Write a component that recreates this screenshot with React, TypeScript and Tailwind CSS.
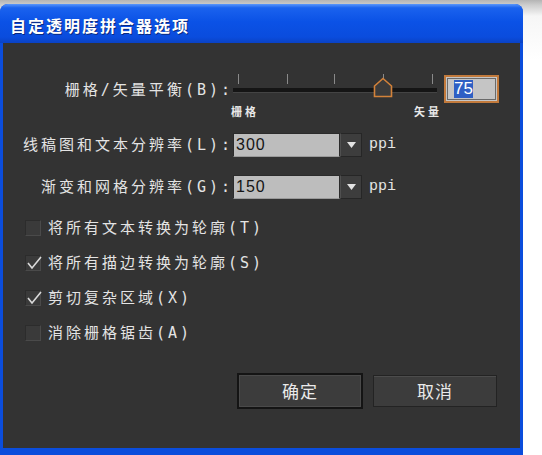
import * as React from "react";

// 自定透明度拼合器选项 — dark dialog inside an XP-style blue frame

const checkRows = [
  { label: "将所有文本转换为轮廓(T)", checked: false },
  { label: "将所有描边转换为轮廓(S)", checked: true },
  { label: "剪切复杂区域(X)", checked: true },
  { label: "消除栅格锯齿(A)", checked: false },
];

const Select = ({ value }: { value: string }) => (
  <div className="flex items-center">
    <div className="flex h-[24px] w-[129px]">
      <div className="flex-1 border border-[#2b2b2b] border-b-[#9a9a9a] bg-[#bdbdbd] pl-[2px] font-['Liberation_Sans',sans-serif] text-[16px] leading-[22px] tracking-[1px] text-[#151515]">
        {value}
      </div>
      <div className="flex w-[22px] items-center justify-center border border-[#262626] border-l-[#505050] bg-[#3d3d3d]">
        <svg width="9" height="6" viewBox="0 0 9 6">
          <path d="M0 0 H9 L4.5 6 Z" fill="#e2e2e2" />
        </svg>
      </div>
    </div>
    <span className="ml-[7px] font-['Liberation_Mono',monospace] text-[15px] leading-[20px] text-[#e4e4e4]">ppi</span>
  </div>
);

const Slider = () => (
  <div className="flex w-[208px] flex-col">
    <svg width="208" height="25" viewBox="0 0 208 25">
      {[5, 54, 101, 150, 199].map((x) => (
        <line key={x} x1={x + 0.5} y1="1" x2={x + 0.5} y2="11" stroke="#8a8a8a" strokeWidth="1" />
      ))}
      <rect x="0" y="15" width="204" height="4" fill="#151515" />
      <rect x="0" y="19" width="204" height="1" fill="#444" />
      <path d="M150 5.5 L158.5 13 V23.5 H141.5 V13 Z" fill="#3b3b3b" stroke="#d3823a" strokeWidth="1.6" />
    </svg>
    <div className="mt-[6px] flex font-['Noto_Sans_CJK_SC',sans-serif] text-[11px] font-bold leading-[14px] tracking-[3px] text-[#e8e8e8]">
      <span className="ml-[-2px]">栅格</span>
      <span className="ml-auto mr-[-1px]">矢量</span>
    </div>
  </div>
);

const CheckRow = ({ label, checked }: { label: string; checked: boolean }) => (
  <div className="flex h-[20px] items-center pl-[22px]">
    <div className="relative h-[16px] w-[16px] border border-[#4a4a4a] border-t-[#2c2c2c] border-l-[#2c2c2c] bg-[#3a3a3a]">
      {checked && (
        <svg className="absolute left-[0px] top-[-2px]" width="17" height="17" viewBox="0 0 17 17">
          <path d="M2 9 L6 14 L15 3" fill="none" stroke="#dadada" strokeWidth="1.6" />
        </svg>
      )}
    </div>
    <span className="ml-[7px] font-['DejaVu_Sans_Mono','Noto_Sans_CJK_SC',monospace] text-[15px] leading-[20px] tracking-[3px] text-[#e4e4e4]">
      {label}
    </span>
  </div>
);

export default function App() {
  return (
    <div className="h-[455px] w-[542px] overflow-hidden bg-[linear-gradient(to_bottom,#b4b4b4_0px,#cdcdcd_5px,#f6f6f6_16px,#ffffff_60px)] pt-[4px]">
      <div className="flex h-[451px] w-[523px] flex-col overflow-hidden rounded-t-[8px] bg-[#0b4ddc]">
        {/* 标题栏 */}
        <div className="flex h-[39px] items-center bg-[linear-gradient(to_bottom,#5a96fa_0%,#1a62ee_10%,#0b52e6_45%,#0a4cdd_85%,#0a42c4_100%)] pl-[10px] pt-[3px]">
          <span className="font-['Noto_Sans_CJK_SC',sans-serif] text-[16px] font-bold leading-[20px] tracking-[2px] text-white [text-shadow:1px_1px_0_#0a2a80]">
            自定透明度拼合器选项
          </span>
        </div>

        {/* 对话框内容 */}
        <div className="mx-[3px] mb-[7px] flex flex-1 flex-col bg-[#333333] pt-[30px]">
          {/* 栅格/矢量平衡 */}
          <div className="flex items-start">
            <div className="mt-[7px] w-[230px] text-right font-['DejaVu_Sans_Mono','Noto_Sans_CJK_SC',monospace] text-[15px] leading-[20px] tracking-[3px] text-[#e4e4e4]">
              栅格/矢量平衡(B):
            </div>
            <Slider />
            <div className="ml-[3px] mt-[2px] h-[28px] w-[55px] border-2 border-[#c27a3c] bg-[#c5c5c5] p-[1px]">
              <div className="flex h-full items-center border border-[#6a6a6a] pl-[6px]">
                <span className="bg-[#2e5fc4] font-['Liberation_Sans',sans-serif] text-[17px] leading-[18px] text-white">75</span>
              </div>
            </div>
          </div>

          {/* 分辨率 */}
          <div className="mt-[15px] flex items-center">
            <div className="w-[230px] text-right font-['DejaVu_Sans_Mono','Noto_Sans_CJK_SC',monospace] text-[15px] leading-[20px] tracking-[3px] text-[#e4e4e4]">
              线稿图和文本分辨率(L):
            </div>
            <Select value="300" />
          </div>
          <div className="mt-[18px] flex items-center">
            <div className="w-[230px] text-right font-['DejaVu_Sans_Mono','Noto_Sans_CJK_SC',monospace] text-[15px] leading-[20px] tracking-[3px] text-[#e4e4e4]">
              渐变和网格分辨率(G):
            </div>
            <Select value="150" />
          </div>

          {/* 选项 */}
          <div className="mt-[19px] flex flex-col gap-[15px]">
            {checkRows.map((row) => (
              <CheckRow key={row.label} label={row.label} checked={row.checked} />
            ))}
          </div>

          {/* 按钮 */}
          <div className="mt-[30px] flex items-center justify-end gap-[10px] pr-[23px]">
            <button className="h-[36px] w-[126px] border-2 border-[#141414] bg-[#3c3c3c] font-['Noto_Sans_CJK_SC',sans-serif] text-[17px] tracking-[1px] text-[#eaeaea] shadow-[inset_0_0_0_1px_#4a4a4a]">
              确定
            </button>
            <button className="h-[32px] w-[124px] border border-[#232323] bg-[#3c3c3c] font-['Noto_Sans_CJK_SC',sans-serif] text-[17px] tracking-[1px] text-[#eaeaea] shadow-[inset_0_1px_0_#4c4c4c]">
              取消
            </button>
          </div>
        </div>
      </div>
    </div>
  );
}
